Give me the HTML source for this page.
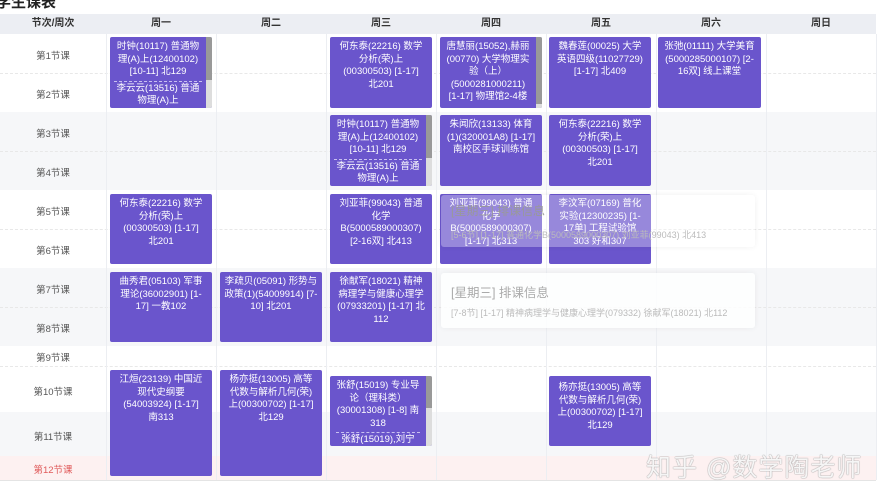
<!DOCTYPE html><html><head><meta charset="utf-8"><style>
*{margin:0;padding:0;box-sizing:border-box}
body{width:885px;height:500px;background:#fff;position:relative;overflow:hidden;font-family:"Liberation Sans","Noto Sans CJK SC",sans-serif}
.a{position:absolute}
.title{left:-4px;top:-9px;font-size:15px;font-weight:bold;color:#222}
.hd{top:14px;height:20px;background:#eceef3;font-size:10px;font-weight:bold;color:#333;text-align:center;line-height:20px}
.row{left:0;width:876px}
.lb{left:0;width:106px;text-align:center;font-size:9.5px;color:#555}
.vl{top:34px;height:446px;width:1px;background:#eceef2}
.c{position:absolute;background:#6a55cc;color:#fff;font-size:9.5px;line-height:12.5px;text-align:center;padding:4px 8px;border-radius:2px;overflow:hidden}
.sb{position:absolute;right:0;top:0;width:6px;height:100%;background:#ddd}
.sb i{display:block;width:6px;height:60%;background:#999}
.dash{border-top:1px dashed #c8c0f0;margin:2px 0 1px}
.pop{position:absolute;background:rgba(255,255,255,.8);border-radius:3px;box-shadow:0 0 6px rgba(0,0,0,.06);color:#bbb}
</style></head><body>
<div class="a title">学生课表</div>
<div class="a hd" style="left:0;width:876px"></div>
<div class="a hd" style="left:0;width:106px">节次/周次</div>
<div class="a hd" style="left:106px;width:110px">周一</div>
<div class="a hd" style="left:216px;width:110px">周二</div>
<div class="a hd" style="left:326px;width:110px">周三</div>
<div class="a hd" style="left:436px;width:110px">周四</div>
<div class="a hd" style="left:546px;width:110px">周五</div>
<div class="a hd" style="left:656px;width:110px">周六</div>
<div class="a hd" style="left:766px;width:110px">周日</div>
<div class="a row" style="top:34px;height:78px;background:#fff"></div>
<div class="a row" style="top:112px;height:78px;background:#f6f7f9"></div>
<div class="a row" style="top:190px;height:78px;background:#fff"></div>
<div class="a row" style="top:268px;height:78px;background:#f6f7f9"></div>
<div class="a row" style="top:346px;height:66px;background:#fff"></div>
<div class="a row" style="top:412px;height:44px;background:#f6f7f9"></div>
<div class="a row" style="top:456px;height:24px;background:#fdf1f1"></div>
<div class="a" style="left:0;top:480px;width:876px;height:1px;background:#e4e4e4"></div>
<div class="a" style="left:0;top:73px;width:876px;border-top:1px dashed #e8e8e8"></div>
<div class="a" style="left:0;top:151px;width:876px;border-top:1px dashed #e8e8e8"></div>
<div class="a" style="left:0;top:229px;width:876px;border-top:1px dashed #e8e8e8"></div>
<div class="a" style="left:0;top:307px;width:876px;border-top:1px dashed #e8e8e8"></div>
<div class="a" style="left:0;top:366px;width:876px;border-top:1px dashed #e8e8e8"></div>
<div class="a vl" style="left:106px"></div><div class="a vl" style="left:216px"></div><div class="a vl" style="left:326px"></div><div class="a vl" style="left:436px"></div><div class="a vl" style="left:546px"></div><div class="a vl" style="left:656px"></div><div class="a vl" style="left:766px"></div><div class="a vl" style="left:876px"></div>
<div class="a lb" style="top:48px">第1节课</div>
<div class="a lb" style="top:87px">第2节课</div>
<div class="a lb" style="top:126px">第3节课</div>
<div class="a lb" style="top:165px">第4节课</div>
<div class="a lb" style="top:204px">第5节课</div>
<div class="a lb" style="top:243px">第6节课</div>
<div class="a lb" style="top:282px">第7节课</div>
<div class="a lb" style="top:321px">第8节课</div>
<div class="a lb" style="top:350px">第9节课</div>
<div class="a lb" style="top:384px">第10节课</div>
<div class="a lb" style="top:429px">第11节课</div>
<div class="a lb" style="top:462px;color:#e05a5a">第12节课</div>

<div class="c" style="left:110px;top:37px;width:102px;height:71px;padding-left:4px;padding-right:10px">时钟(10117) 普通物理(A)上(12400102) [10-11] 北129<div class="dash"></div>李云云(13516) 普通物理(A)上<div class="sb"><i></i></div></div>
<div class="c" style="left:330px;top:37px;width:102px;height:71px">何东泰(22216) 数学分析(荣)上 (00300503) [1-17] 北201</div>
<div class="c" style="left:440px;top:37px;width:102px;height:71px;padding-left:4px;padding-right:10px">唐慧丽(15052),赫丽(00770) 大学物理实验（上）(5000281000211) [1-17] 物理馆2-4楼<div class="sb"><i style="height:95%"></i></div></div>
<div class="c" style="left:549px;top:37px;width:102px;height:71px">魏春莲(00025) 大学英语四级(11027729) [1-17] 北409</div>
<div class="c" style="left:658px;top:37px;width:103px;height:71px;padding:4px 5px">张弛(01111) 大学美育(5000285000107) [2-16双] 线上课堂</div>

<div class="c" style="left:330px;top:115px;width:102px;height:71px;padding-left:4px;padding-right:10px">时钟(10117) 普通物理(A)上(12400102) [10-11] 北129<div class="dash"></div>李云云(13516) 普通物理(A)上<div class="sb"><i></i></div></div>
<div class="c" style="left:440px;top:115px;width:102px;height:71px;padding:4px 5px">朱闻欣(13133) 体育(1)(320001A8) [1-17] 南校区手球训练馆</div>
<div class="c" style="left:549px;top:115px;width:102px;height:71px">何东泰(22216) 数学分析(荣)上 (00300503) [1-17] 北201</div>

<div class="c" style="left:110px;top:194px;width:102px;height:70px">何东泰(22216) 数学分析(荣)上 (00300503) [1-17] 北201</div>
<div class="c" style="left:330px;top:194px;width:102px;height:70px;padding:4px 5px">刘亚菲(99043) 普通化学 B(5000589000307) [2-16双] 北413</div>
<div class="c" style="left:440px;top:194px;width:102px;height:70px;padding:4px 5px">刘亚菲(99043) 普通化学 B(5000589000307) [1-17] 北313</div>
<div class="c" style="left:549px;top:194px;width:102px;height:70px">李汶军(07169) 普化实验(12300235) [1-17单] 工程试验馆303 好和307</div>
<div class="pop" style="left:441px;top:195px;width:314px;height:52px;background:rgba(255,255,255,.3)"><div style="position:absolute;left:10px;top:7px;font-size:12px;color:#999">[星期三] 排课信息</div><div style="position:absolute;left:10px;top:33px;font-size:9px">[5-6节] [1-17] 普通化学B(5000589000307) 刘亚菲(99043) 北413</div></div>

<div class="c" style="left:110px;top:272px;width:102px;height:70px">曲秀君(05103) 军事理论(36002901) [1-17] 一教102</div>
<div class="c" style="left:220px;top:272px;width:102px;height:70px;padding:4px 4px">李疏贝(05091) 形势与政策(1)(54009914) [7-10] 北201</div>
<div class="c" style="left:330px;top:272px;width:102px;height:70px;padding:4px 5px">徐献军(18021) 精神病理学与健康心理学(07933201) [1-17] 北112</div>
<div class="pop" style="left:441px;top:273px;width:314px;height:55px"><div style="position:absolute;left:10px;top:9px;font-size:12.5px;color:#aaa">[星期三] 排课信息</div><div style="position:absolute;left:10px;top:33px;font-size:9px">[7-8节] [1-17] 精神病理学与健康心理学(079332) 徐献军(18021) 北112</div></div>

<div class="c" style="left:110px;top:370px;width:102px;height:106px">江烜(23139) 中国近现代史纲要(54003924) [1-17] 南313</div>
<div class="c" style="left:220px;top:370px;width:102px;height:106px">杨亦挺(13005) 高等代数与解析几何(荣)上(00300702) [1-17] 北129</div>
<div class="c" style="left:330px;top:376px;width:102px;height:70px;padding-left:6px;padding-right:12px">张舒(15019) 专业导论（理科类）(30001308) [1-8] 南318<div class="dash"></div>张舒(15019),刘宁<div class="sb"><i style="height:45%"></i></div></div>
<div class="c" style="left:549px;top:376px;width:102px;height:70px;padding-top:6px">杨亦挺(13005) 高等代数与解析几何(荣)上(00300702) [1-17] 北129</div>

<div class="a" style="left:646px;top:448px;font-size:25px;color:rgba(255,255,255,.9);text-shadow:0 0 1px #999,0 0 1px #999;letter-spacing:1px">知乎 @数学陶老师</div>
</body></html>
